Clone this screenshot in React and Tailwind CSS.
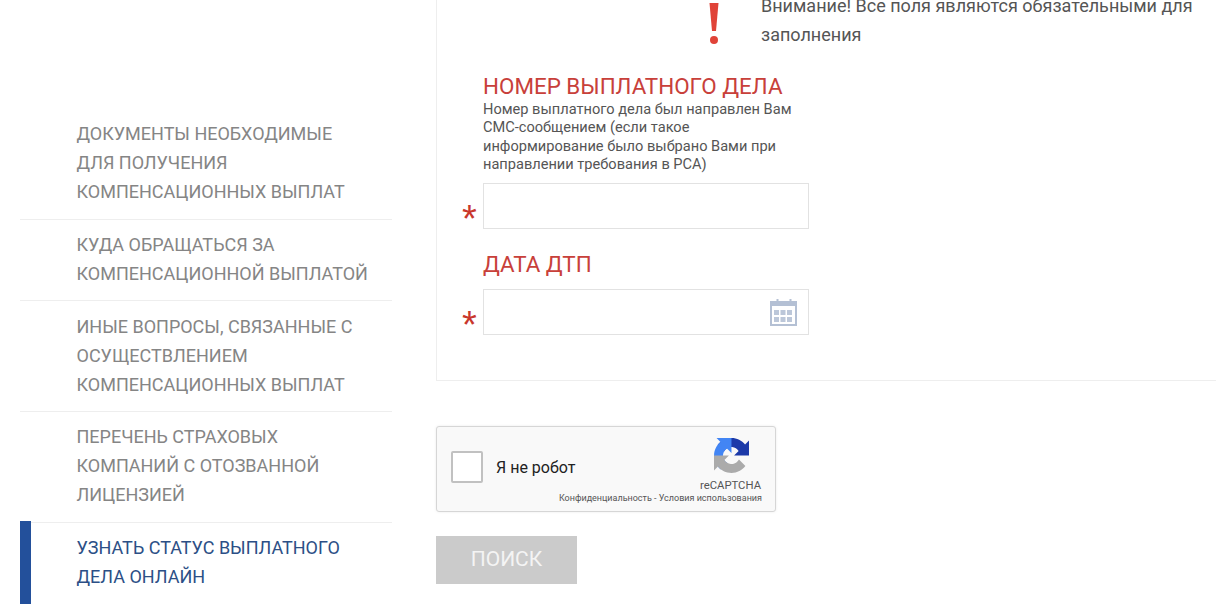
import React from 'react';

const menu = [
  { lines: ['ДОКУМЕНТЫ НЕОБХОДИМЫЕ', 'ДЛЯ ПОЛУЧЕНИЯ', 'КОМПЕНСАЦИОННЫХ ВЫПЛАТ'], cls: 'pb-[13px]' },
  { lines: ['КУДА ОБРАЩАТЬСЯ ЗА', 'КОМПЕНСАЦИОННОЙ ВЫПЛАТОЙ'], cls: 'border-t pt-[10px] pb-[12px]' },
  { lines: ['ИНЫЕ ВОПРОСЫ, СВЯЗАННЫЕ С', 'ОСУЩЕСТВЛЕНИЕМ', 'КОМПЕНСАЦИОННЫХ ВЫПЛАТ'], cls: 'border-t pt-[11px] pb-[12px]' },
  { lines: ['ПЕРЕЧЕНЬ СТРАХОВЫХ', 'КОМПАНИЙ С ОТОЗВАННОЙ', 'ЛИЦЕНЗИЕЙ'], cls: 'border-t pt-[10px] pb-[13px]' },
  { lines: ['УЗНАТЬ СТАТУС ВЫПЛАТНОГО', 'ДЕЛА ОНЛАЙН'], cls: 'border-t pt-[10px]', active: true },
];

const CalendarIcon = () => (
  <svg width="28" height="28" viewBox="0 0 28 28" className="absolute right-[11px] top-[9px]">
    <rect x="2" y="3" width="25" height="23" fill="none" stroke="#b4c0d4" strokeWidth="2" />
    <rect x="2" y="3" width="25" height="4" fill="#b4c0d4" />
    <rect x="7.500" y="0" width="2" height="6" fill="#b4c0d4" />
    <rect x="20.500" y="0" width="2" height="6" fill="#b4c0d4" />
    {[5, 11.5, 18].map((x) =>
      [11, 18].map((y) => <rect key={`${x}-${y}`} x={x} y={y} width="5" height="5" fill="#bcc7d9" />)
    )}
  </svg>
);

const RecaptchaLogo = () => (
  <svg width="35" height="35" viewBox="0 0 64 64">
    <path d="M64 31.955l-.033-1.37V4.687l-7.16 7.16C50.948 4.674 42.033.093 32.05.093c-10.4 0-19.622 4.96-25.458 12.64l11.734 11.858a15.55 15.55 0 0 1 4.75-5.33c2.05-1.6 4.952-2.906 8.973-2.906.486 0 .86.057 1.136.163 4.982.393 9.3 3.143 11.843 7.13l-8.306 8.306 32.27.001" fill="#1c3aa9" />
    <path d="M31.955 0l-1.37.033H4.687l7.16 7.16C4.674 13.052.093 21.967.093 31.95c0 10.4 4.96 19.622 12.64 25.458l11.858-11.734a15.55 15.55 0 0 1-5.33-4.75c-1.6-2.05-2.906-4.952-2.906-8.973 0-.486.057-.86.163-1.136.393-4.982 3.143-9.3 7.13-11.843l8.306 8.306.001-32.27" fill="#4285f4" />
    <path d="M.001 32l.033 1.37v25.898l7.16-7.16c5.858 7.173 14.774 11.754 24.757 11.754 10.4 0 19.622-4.96 25.458-12.64L45.676 39.364a15.55 15.55 0 0 1-4.75 5.33c-2.05 1.6-4.952 2.906-8.973 2.906-.486 0-.86-.057-1.136-.163-4.982-.393-9.3-3.143-11.843-7.13l8.306-8.306-32.27-.001" fill="#ababab" />
  </svg>
);

const Field = ({ children }) => (
  <div className="relative w-[326px]">
    <span className="absolute left-[-21px] top-[17px] text-[38px] leading-[38px] text-[#c9372c] font-['Liberation_Sans',sans-serif]">*</span>
    <div className="relative h-[46px] border border-[#e2e2e2] bg-white">{children}</div>
  </div>
);

export default function App() {
  return (
    <div className="h-[608px] overflow-hidden bg-white font-['Roboto',sans-serif] flex">
      <aside className="w-[436px] shrink-0 pl-5 pt-[119px]">
        <ul className="w-[372px]">
          {menu.map((item, i) => (
            <li
              key={i}
              className={`relative pl-[56.500px] text-[18px] leading-[29px] border-[#eeeeee] ${item.cls} ${item.active ? 'text-[#2c4f86]' : 'text-[#858585]'}`}
            >
              {item.active && <span className="absolute left-0 top-[-2px] h-[83px] w-[11px] bg-[#23509b]" />}
              {item.lines.map((line) => (
                <div key={line}>{line}</div>
              ))}
            </li>
          ))}
        </ul>
      </aside>

      <main className="flex-1">
        <section className="flex h-[381px] flex-col border-l border-b border-[#eeeeee] pl-[46px]">
          <div className="flex -mt-[9px]">
            <svg width="10" height="41" viewBox="0 0 10 41" className="ml-[226px] mt-[12px] shrink-0">
              <path d="M0.500 0 H9.500 L7 28 H3 Z" fill="#e04338" />
              <circle cx="5" cy="37" r="4" fill="#e04338" />
            </svg>
            <p className="ml-[42px] w-[440px] text-[18px] leading-[29px] text-[#555555]">
              Внимание! Все поля являются обязательными для заполнения
            </p>
          </div>
          <h2 className="mt-[23px] text-[22.400px] leading-[28px] text-[#c8403a]">НОМЕР ВЫПЛАТНОГО ДЕЛА</h2>
          <p className="w-[326px] text-[14.600px] leading-[18.300px] text-[#555555]">
            Номер выплатного дела был направлен Вам
            <br />
            СМС-сообщением (если такое
            <br />
            информирование было выбрано Вами при
            <br />
            направлении требования в РСА)
          </p>
          <div className="mt-[10px]">
            <Field />
          </div>
          <h2 className="mt-[21px] text-[22.400px] leading-[28px] text-[#c8403a]">ДАТА ДТП</h2>
          <div className="mt-[11px]">
            <Field>
              <CalendarIcon />
            </Field>
          </div>
        </section>

        <div className="mt-[45px] h-[86px] w-[340px] rounded-[3px] border border-[#d6d6d6] bg-[#f9f9f9] shadow-[0_0_3px_rgba(0,0,0,0.08)] flex relative">
          <div className="ml-[14px] mt-[24px] h-[32px] w-[32px] rounded-[2px] border-2 border-[#c1c1c1] bg-white" />
          <span className="ml-[13px] mt-[31px] text-[16px] leading-[20px] text-[#222222]">Я не робот</span>
          <div className="absolute right-[26px] top-[11px]">
            <RecaptchaLogo />
          </div>
          <span className="absolute right-[14px] top-[52px] text-[11.300px] leading-[14px] text-[#555555]">reCAPTCHA</span>
          <span className="absolute right-[13px] top-[65px] text-[9px] leading-[12px] text-[#555555] whitespace-nowrap">Конфиденциальность - Условия использования</span>
        </div>

        <button className="mt-[24px] block h-[48px] w-[141px] bg-[#cbcbcb] text-[21px] text-[#f4f4f4]">ПОИСК</button>
      </main>
    </div>
  );
}
